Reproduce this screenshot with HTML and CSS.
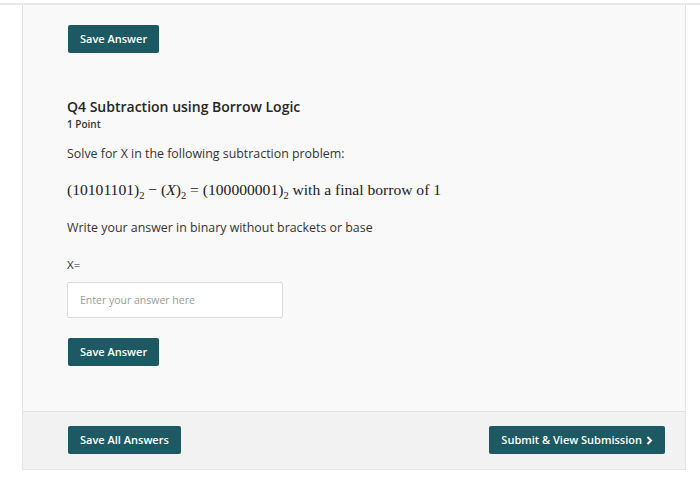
FILE: index.html
```html
<!DOCTYPE html>
<html lang="en">
<head>
    <meta charset="UTF-8">
    <meta name="viewport" content="width=device-width, initial-scale=1.0">
    <title>Quiz - Q4</title>
    <link rel="stylesheet" href="styles.css">
</head>
<body>
    <div class="page">
        <div class="panel">
            <div class="question-body">
                <button class="btn">Save Answer</button>

                <div class="question">
                    <h2 class="q-title">Q4 Subtraction using Borrow Logic</h2>
                    <div class="q-points">1 Point</div>

                    <p class="q-text">Solve for X in the following subtraction problem:</p>
                    <p class="q-math">(10101101)<sub>2</sub> &minus; (<i>X</i>)<sub>2</sub> = (100000001)<sub>2</sub> with a final borrow of 1</p>
                    <p class="q-text">Write your answer in binary without brackets or base</p>

                    <div class="q-label">X=</div>
                    <input class="answer" type="text" placeholder="Enter your answer here">

                    <button class="btn">Save Answer</button>
                </div>
            </div>

            <div class="panel-footer">
                <button class="btn">Save All Answers</button>
                <button class="btn">Submit &amp; View Submission
                    <svg class="chev" width="7" height="9" viewBox="0 0 7 9"><path d="M1.5 1 L5 4.5 L1.5 8" fill="none" stroke="#ffffff" stroke-width="2"/></svg>
                </button>
            </div>
        </div>
    </div>
</body>
</html>
```

FILE: styles.css
```css
body {
    margin: 0;
    padding-top: 3px;
    background-color: #ffffff;
    font-family: "Open Sans", Arial, sans-serif;
    color: #2f2f2f;
}

.page {
    border-top: 2px solid #e8e8e8;
}

.panel {
    margin: 0 14px 0 22px;
    background-color: #f9f9f9;
    border-left: 1px solid #e4e4e4;
    border-right: 1px solid #e4e4e4;
    border-bottom: 1px solid #e4e4e4;
}

.question-body {
    padding: 20px 45px 45px 44px;
}

.btn {
    display: inline-flex;
    align-items: center;
    gap: 4px;
    height: 28px;
    padding: 0 12px;
    font-family: "Open Sans", Arial, sans-serif;
    font-size: 11px;
    font-weight: 600;
    line-height: 28px;
    color: #ffffff;
    background-color: #1c5962;
    border: none;
    border-radius: 2px;
    cursor: pointer;
}

.question-body > .btn {
    margin-left: 1px;
}

.question {
    margin-top: 44px;
}

.q-title {
    margin: 0;
    font-size: 14px;
    font-weight: 600;
    line-height: 19px;
    color: #262626;
}

.q-points {
    margin-top: 1px;
    font-size: 10px;
    font-weight: 600;
    line-height: 14px;
    color: #333333;
}

.q-text {
    margin: 14px 0 0;
    font-size: 12.4px;
    line-height: 18px;
    color: #333333;
}

.q-math {
    margin: 17px 0 19px;
    font-family: "Liberation Serif", "Times New Roman", serif;
    font-size: 15.6px;
    line-height: 20px;
    color: #222222;
}

.q-math sub {
    font-size: 10.5px;
    line-height: 0;
}

.q-label {
    margin-top: 20px;
    font-size: 11.5px;
    line-height: 16px;
}

.answer {
    display: block;
    box-sizing: border-box;
    width: 216px;
    height: 36px;
    margin: 9px 0 20px;
    padding: 0 12px;
    font-family: "Open Sans", Arial, sans-serif;
    font-size: 10.5px;
    background-color: #ffffff;
    border: 1px solid #dcdcdc;
    border-radius: 2px;
}

.answer::placeholder {
    color: #9a9a9a;
}

.question .btn {
    margin-left: 1px;
}

.panel-footer {
    display: flex;
    justify-content: space-between;
    padding: 14px 20px 15px 45px;
    background-color: #f2f2f2;
    border-top: 1px solid #e2e2e2;
}
```
